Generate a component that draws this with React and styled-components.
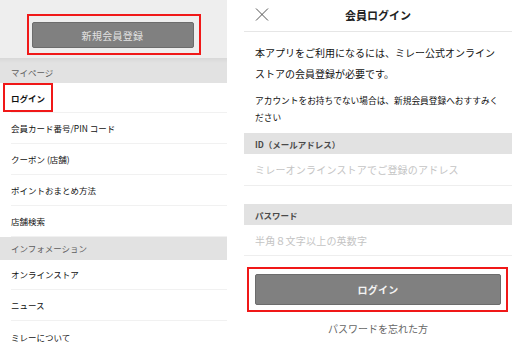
import React from "react";
import styled, { createGlobalStyle } from "styled-components";

const GlobalStyle = createGlobalStyle`
  html, body {
    margin: 0;
    padding: 0;
    background: #ffffff;
  }
  body {
    font-family: "Noto Sans CJK JP", "Noto Sans", sans-serif;
    color: #222;
  }
`;

const StyledPage = styled.div`
  display: flex;
  width: 512px;
  height: 352px;
  overflow: hidden;
  column-gap: 17px;
`;

// Left: menu
const StyledMenu = styled.div`
  width: 227px;
  display: flex;
  flex-direction: column;
`;

const StyledMenuTop = styled.div`
  height: 58px;
  box-sizing: border-box;
  padding-top: 14px;
  background-color: #eeeeee;
  display: flex;
  justify-content: center;
  align-items: flex-start;
`;

const StyledRedFrame = styled.div`
  box-sizing: border-box;
  border: 2px solid #f01818;
  display: flex;
  align-items: center;
  justify-content: center;
  width: ${(p) => p.$w};
  height: ${(p) => p.$h};
  padding: ${(p) => p.$pad || "0"};
  margin: ${(p) => p.$margin || "0"};
`;

const StyledGreyButton = styled.button`
  width: 100%;
  height: 100%;
  border: 1px solid #6c6c6c;
  border-radius: 2px;
  background-color: #808080;
  color: ${(p) => p.$text};
  font-family: "Noto Sans CJK JP", sans-serif;
  font-size: 10px;
  font-weight: ${(p) => p.$weight || 400};
  letter-spacing: 0.3px;
  padding: 0;
`;

const StyledSectionHeader = styled.div`
  height: ${(p) => p.$h};
  box-sizing: border-box;
  display: flex;
  align-items: center;
  padding-left: 11px;
  padding-top: ${(p) => (p.$shade ? "3px" : "0")};
  font-size: 8.5px;
  color: #5e5e5e;
  background: ${(p) =>
    p.$shade
      ? "linear-gradient(to bottom, #d8d8d8 0px, #e2e2e2 5px, #e2e2e2 100%)"
      : "#e2e2e2"};
`;

const StyledMenuRow = styled.div`
  height: 31px;
  box-sizing: border-box;
  margin-left: 11px;
  display: flex;
  align-items: center;
  border-bottom: ${(p) => (p.$last ? "none" : "1px solid #f1f1f1")};
  font-size: 8.5px;
  color: #111;
`;

const StyledMarkedLabel = styled.span`
  box-sizing: border-box;
  height: 29px;
  margin-left: -8px;
  padding: 0 6px;
  display: inline-flex;
  align-items: center;
  border: 2px solid #f01818;
  font-weight: 700;
  color: #111;
`;

// Right: login
const StyledLogin = styled.div`
  flex: 1;
  display: flex;
  flex-direction: column;
`;

const StyledLoginHeader = styled.div`
  height: 32px;
  box-sizing: border-box;
  border-bottom: 1px solid #e6e6e6;
  display: flex;
  align-items: center;
  position: relative;
  justify-content: center;
`;

const StyledClose = styled.svg`
  position: absolute;
  left: 11px;
  top: 8px;
`;

const StyledTitle = styled.div`
  font-size: 11px;
  font-weight: 700;
  color: #222;
  margin-top: -2px;
`;

const StyledIntro = styled.p`
  margin: ${(p) => p.$margin};
  padding: 0 11px;
  font-size: ${(p) => p.$size};
  line-height: ${(p) => p.$lh};
  color: #111;
`;

const StyledFieldLabel = styled.div`
  height: 21px;
  margin-top: ${(p) => p.$top};
  background-color: #e2e2e2;
  display: flex;
  align-items: center;
  padding-left: 11px;
  font-size: 8.5px;
  font-weight: 700;
  color: #4a4a4a;
`;

const StyledInput = styled.input`
  height: ${(p) => p.$h};
  box-sizing: border-box;
  border: none;
  border-bottom: 1px solid #eeeeee;
  padding: 0 11px;
  outline: none;
  font-family: "Noto Sans CJK JP", sans-serif;
  font-size: 10px;
  letter-spacing: 0.2px;
  &::placeholder {
    color: #c4c4c4;
  }
`;

const StyledForgot = styled.div`
  margin-top: 8px;
  text-align: center;
  font-size: 10px;
  line-height: 18px;
  color: #666;
`;

const menuItems = [
  "会員カード番号/PIN コード",
  "クーポン (店舗)",
  "ポイントおまとめ方法",
  "店舗検索",
];

const infoItems = ["オンラインストア", "ニュース", "ミレーについて"];

export default function App() {
  return (
    <>
      <GlobalStyle />
      <StyledPage>
        <StyledMenu>
          <StyledMenuTop>
            <StyledRedFrame $w="174px" $h="41px" $pad="6px 5px 5px 3px">
              <StyledGreyButton $text="#e2e2e2">新規会員登録</StyledGreyButton>
            </StyledRedFrame>
          </StyledMenuTop>
          <StyledSectionHeader $h="25px" $shade>
            マイページ
          </StyledSectionHeader>
          <StyledMenuRow>
            <StyledMarkedLabel>ログイン</StyledMarkedLabel>
          </StyledMenuRow>
          {menuItems.map((item) => (
            <StyledMenuRow key={item}>{item}</StyledMenuRow>
          ))}
          <StyledSectionHeader $h="23px">インフォメーション</StyledSectionHeader>
          {infoItems.map((item, i) => (
            <StyledMenuRow key={item} $last={i === infoItems.length - 1}>
              {item}
            </StyledMenuRow>
          ))}
        </StyledMenu>

        <StyledLogin>
          <StyledLoginHeader>
            <StyledClose width="14" height="13" viewBox="0 0 14 13">
              <path
                d="M1 0.5 L13 12.5 M13 0.5 L1 12.5"
                stroke="#555"
                strokeWidth="1"
                fill="none"
              />
            </StyledClose>
            <StyledTitle>会員ログイン</StyledTitle>
          </StyledLoginHeader>
          <StyledIntro $margin="10px 0 0" $size="10px" $lh="21px">
            本アプリをご利用になるには、ミレー公式オンラインストアの会員登録が必要です。
          </StyledIntro>
          <StyledIntro $margin="8px 0 0" $size="8.7px" $lh="17px">
            アカウントをお持ちでない場合は、新規会員登録へおすすみください
          </StyledIntro>
          <StyledFieldLabel $top="7px">ID（メールアドレス）</StyledFieldLabel>
          <StyledInput
            $h="32px"
            placeholder="ミレーオンラインストアでご登録のアドレス"
          />
          <StyledFieldLabel $top="18px">パスワード</StyledFieldLabel>
          <StyledInput $h="31px" type="password" placeholder="半角８文字以上の英数字" />
          <StyledRedFrame
            $w="261px"
            $h="45px"
            $pad="5px 5px 5px 6px"
            $margin="11px 0 0 3px"
          >
            <StyledGreyButton $text="#f4f4f4" $weight={700}>
              ログイン
            </StyledGreyButton>
          </StyledRedFrame>
          <StyledForgot>パスワードを忘れた方</StyledForgot>
        </StyledLogin>
      </StyledPage>
    </>
  );
}
